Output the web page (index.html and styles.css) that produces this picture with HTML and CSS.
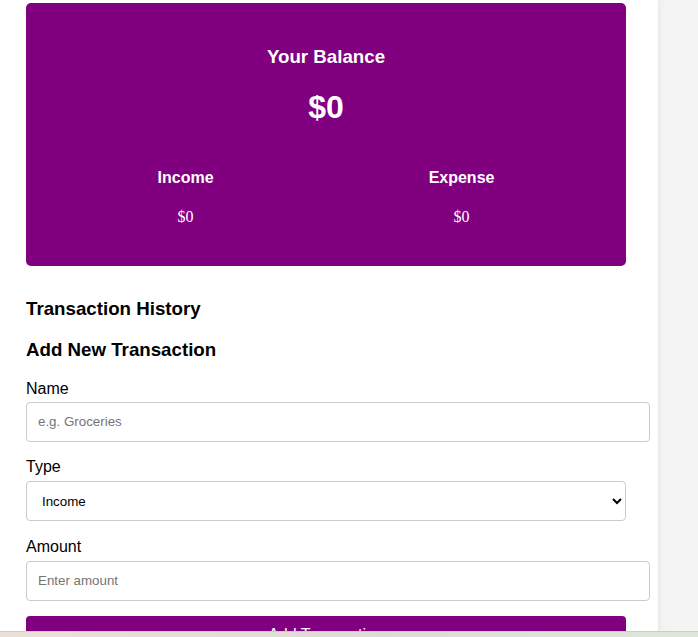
FILE: index.html
```html
<!DOCTYPE html>
<html lang="en">
<head>
<meta charset="utf-8">
<title>Expense Tracker</title>
<link rel="stylesheet" href="styles.css">
</head>
<body>
<div class="page">
  <main class="container">
    <section class="balance-card">
      <h3 class="balance-title">Your Balance</h3>
      <h1 class="balance-amount">$0</h1>
      <div class="summary">
        <div class="summary-item">
          <h4 class="summary-label">Income</h4>
          <p class="summary-value">$0</p>
        </div>
        <div class="summary-item">
          <h4 class="summary-label">Expense</h4>
          <p class="summary-value">$0</p>
        </div>
      </div>
    </section>

    <h3 class="section-title history-title">Transaction History</h3>
    <ul class="history-list"></ul>

    <h3 class="section-title add-title">Add New Transaction</h3>
    <form class="tx-form">
      <div class="field field-name">
        <label class="field-label" for="name">Name</label>
        <input class="text-input" id="name" type="text" placeholder="e.g. Groceries">
      </div>
      <div class="field field-type">
        <label class="field-label" for="type">Type</label>
        <select class="select-input" id="type">
          <option>Income</option>
          <option>Expense</option>
        </select>
      </div>
      <div class="field field-amount">
        <label class="field-label" for="amount">Amount</label>
        <input class="text-input" id="amount" type="number" placeholder="Enter amount">
      </div>
      <button class="submit-btn" type="button">Add Transaction</button>
    </form>
  </main>
</div>
<div class="taskbar-edge"></div>
</body>
</html>
```

FILE: styles.css
```css
* {
  box-sizing: border-box;
}

html, body {
  margin: 0;
  padding: 0;
  height: 100%;
}

body {
  background: #f4f4f4;
  font-family: "Liberation Sans", Arial, sans-serif;
  color: #000;
  overflow: hidden;
}

.page {
  width: 658px;
  min-height: 100%;
  background: #fff;
  box-shadow: 0 0 8px rgba(0, 0, 0, 0.08);
}

.container {
  width: 626px;
  padding: 3px 0 0 26px;
}

.balance-card {
  width: 600px;
  height: 263px;
  background: #800080;
  color: #fff;
  border-radius: 5px;
  text-align: center;
  padding: 43px 24px 0;
}

.balance-title {
  margin: 0;
  font-size: 18.72px;
  line-height: 22px;
  font-weight: bold;
}

.balance-amount {
  margin: 21px 0 0;
  font-size: 32px;
  line-height: 37px;
  font-weight: bold;
}

.summary {
  display: flex;
  justify-content: space-around;
  margin-top: 43px;
}

.summary-label {
  margin: 0;
  font-size: 16px;
  line-height: 18px;
  font-weight: bold;
}

.summary-value {
  margin: 21px 0 0;
  font-family: "Liberation Serif", "Times New Roman", serif;
  font-size: 16px;
  line-height: 18px;
}

.section-title {
  margin: 0;
  font-size: 18.72px;
  line-height: 22px;
  font-weight: bold;
}

.history-title {
  margin-top: 32px;
}

.history-list {
  list-style: none;
  margin: 0;
  padding: 0;
}

.add-title {
  margin-top: 19px;
}

.tx-form {
  display: flex;
  flex-direction: column;
  margin-top: 19px;
}

.field {
  display: flex;
  flex-direction: column;
  align-items: flex-start;
}

.field-name {
  margin-bottom: 16px;
}

.field-type {
  margin-bottom: 17px;
}

.field-amount {
  margin-bottom: 15px;
}

.field-label {
  font-size: 16px;
  line-height: 18px;
  margin-bottom: 4px;
}

.field-type .field-label,
.field-amount .field-label {
  margin-bottom: 5px;
}

.text-input {
  box-sizing: content-box;
  width: 600px;
  height: 16px;
  padding: 11px;
  border: 1px solid #ccc;
  border-radius: 4px;
  font-family: "Liberation Sans", Arial, sans-serif;
  font-size: 13.33px;
  line-height: 16px;
  color: #000;
  background: #fff;
}

.text-input::placeholder {
  color: #757575;
}

.select-input {
  width: 600px;
  height: 40px;
  padding: 0 11px 0 11px;
  border: 1px solid #ccc;
  border-radius: 4px;
  font-family: "Liberation Sans", Arial, sans-serif;
  font-size: 13.33px;
  color: #000;
  background: #fff;
}

.submit-btn {
  width: 600px;
  padding: 10px;
  border: none;
  border-radius: 4px;
  background: #800080;
  color: #fff;
  font-family: "Liberation Sans", Arial, sans-serif;
  font-size: 16px;
  line-height: 18px;
  text-align: center;
}

.taskbar-edge {
  position: fixed;
  left: 0;
  right: 0;
  bottom: 0;
  height: 6px;
  border-top: 1px solid #cfcac4;
  background: linear-gradient(90deg, #ece0d6 0%, #e2ddd6 35%, #dcdcd6 55%, #dde4d8 80%, #dde6d8 100%);
}
```
